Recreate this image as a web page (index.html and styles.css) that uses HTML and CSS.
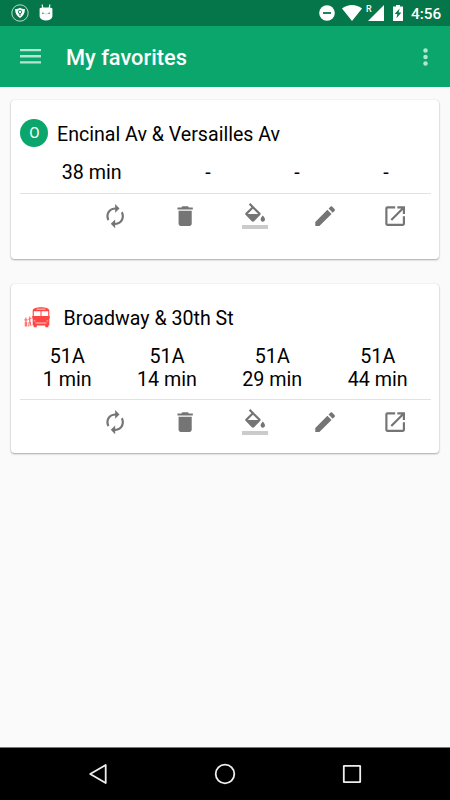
FILE: index.html
```html
<!DOCTYPE html>
<html lang="en">
<head>
<meta charset="utf-8">
<title>My favorites</title>
<link rel="stylesheet" href="styles.css">
</head>
<body>
<svg class="defs" aria-hidden="true">
  <symbol id="refresh" viewBox="0 0 24 24"><path d="M12 6v3l4-4-4-4v3c-4.42 0-8 3.58-8 8 0 1.57.46 3.03 1.24 4.26L6.7 14.8A5.87 5.87 0 0 1 6 12c0-3.31 2.69-6 6-6zm6.76 1.74L17.3 9.2c.44.84.7 1.79.7 2.8 0 3.31-2.69 6-6 6v-3l-4 4 4 4v-3c4.42 0 8-3.58 8-8 0-1.57-.46-3.03-1.24-4.26z"/></symbol>
  <symbol id="trash" viewBox="0 0 24 24"><path d="M6 19c0 1.1.9 2 2 2h8c1.1 0 2-.9 2-2V7H6v12zM19 4h-3.500l-1-1h-5l-1 1H5v2h14V4z"/></symbol>
  <symbol id="fill" viewBox="0 0 24 24"><path d="M16.560 8.940L7.620 0 6.210 1.410l2.380 2.380-5.150 5.150a1.490 1.490 0 0 0 0 2.120l5.500 5.500c.29.29.68.44 1.060.44s.77-.15 1.060-.44l5.500-5.500c.59-.58.59-1.530 0-2.120zM5.210 10L10 5.210 14.790 10H5.210zM19 11.500s-2 2.170-2 3.500c0 1.100.9 2 2 2s2-.9 2-2c0-1.330-2-3.500-2-3.500z"/><path class="swatch" d="M0 20h24v4H0z"/></symbol>
  <symbol id="pencil" viewBox="0 0 24 24"><path d="M3 17.250V21h3.750L17.810 9.940l-3.750-3.750L3 17.250zM20.710 7.040a1 1 0 0 0 0-1.410l-2.340-2.340a1 1 0 0 0-1.410 0l-1.830 1.830 3.750 3.750 1.830-1.830z"/></symbol>
  <symbol id="open" viewBox="0 0 24 24"><path d="M19 19H5V5h7V3H5a2 2 0 0 0-2 2v14c0 1.100.89 2 2 2h14c1.100 0 2-.9 2-2v-7h-2v7zM14 3v2h3.590l-9.830 9.830 1.410 1.410L19 6.410V10h2V3h-7z"/></symbol>
</svg>

<header class="statusbar">
  <svg class="shield" viewBox="0 0 18 18"><circle cx="9" cy="9" r="8.200" fill="none" stroke="#b9dccb" stroke-width="1"/><path d="M9 3.800c1.600 1 3.300 1.300 4.900 1.300 0 4.200-1.400 7-4.900 8.900-3.500-1.900-4.900-4.700-4.900-8.900 1.600 0 3.300-.3 4.900-1.300z" fill="#fff"/><circle cx="9" cy="7.900" r="1.700" fill="none" stroke="#04794a" stroke-width=".9"/><path d="M9 9.500v2.500" stroke="#04794a" stroke-width="1"/></svg>
  <svg class="robot" viewBox="0 0 14 17"><path d="M3 .5l.9 3.500M11 .5L10.100 4" stroke="#fff" stroke-width="1.100"/><path d="M.6 4.500C2 3.200 4 3.600 7 3.600s5-.4 6.400.9V12.500c-.5 2.800-3.200 4-6.400 4s-5.900-1.200-6.400-4z" fill="#fff"/><circle cx="3.900" cy="9.200" r=".8" fill="#04794a"/><circle cx="10.100" cy="9.200" r=".8" fill="#04794a"/><path d="M5 9.600q2 .8 4 0" fill="none" stroke="#9bc9b4" stroke-width=".5"/></svg>
  <span class="spacer"></span>
  <svg class="dnd" viewBox="0 0 16 16"><circle cx="8" cy="8" r="7.800" fill="#fff"/><path d="M4 7.100h8v1.800H4z" fill="#04764a"/></svg>
  <svg class="wifi" viewBox="0 0 20 16"><path d="M0 3.600C5.500-1.200 14.500-1.200 20 3.600L10 16z" fill="#fff"/></svg>
  <span class="roaming">R</span>
  <svg class="signal" viewBox="0 0 16 16"><path d="M16 0v16H0z" fill="#fff"/></svg>
  <svg class="battery" viewBox="0 0 10 16"><path d="M3 0h4v1.600h3V16H0V1.600h3z" fill="#fff"/><path d="M6.600 3.600L1.700 9h2.700l-1 4.200 5-5.600H5.600z" fill="#04764a"/></svg>
  <span class="clock">4:56</span>
</header>

<nav class="appbar">
  <svg class="menu" viewBox="0 0 21 15"><path d="M0 0h21v2.300H0zM0 6.100h21v2.300H0zM0 12.200h21v2.300H0z"/></svg>
  <h1>My favorites</h1>
  <svg class="more" viewBox="0 0 5 18"><circle cx="2.500" cy="2.500" r="2.250"/><circle cx="2.500" cy="9" r="2.250"/><circle cx="2.500" cy="15.500" r="2.250"/></svg>
</nav>

<main>
  <section class="card card-line">
    <div class="heading"><span class="badge">O</span><h2>Encinal Av &amp; Versailles Av</h2></div>
    <div class="times single">
      <div>38 min</div><div>-</div><div>-</div><div>-</div>
    </div>
    <div class="actions">
      <svg><use href="#refresh"/></svg><svg><use href="#trash"/></svg><svg><use href="#fill"/></svg><svg><use href="#pencil"/></svg><svg><use href="#open"/></svg>
    </div>
  </section>

  <section class="card card-stop">
    <div class="heading">
      <svg class="bus" viewBox="0 0 27 21"><path fill="#ff4444" fill-rule="evenodd" d="M8.700 3.600C9 1 12.500.2 17 .2S25 1 25.300 3.600V9h.5v2.500h-.5v7h-1v1.800h-3v-1.800h-8.600v1.800h-3v-1.800h-1v-7h-.5V9h.5zM9.800 4.300V9h6.700V4.300zm7.700 0V9h6.700V4.300zM12.500 1.800v.8h9v-.8z"/><path fill="#ff9c9c" d="M9.700 13.300h1.800v1.200H9.700zM22.500 13.300h1.800v1.200h-1.800zM11.500 15.200h11v1.600h-11z"/><path fill="none" stroke="#ff7070" stroke-width="1.200" d="M1.900 10.500V15M.3 12.800h3.300M1.300 15v4.500M2.600 15v4.500M5.700 9.500V15M4.200 12.300l3.300-1M5.200 15l-.5 4.500M6.300 14.800l.5 4"/></svg>
      <h2>Broadway &amp; 30th St</h2>
    </div>
    <div class="times double">
      <div>51A<br>1 min</div><div>51A<br>14 min</div><div>51A<br>29 min</div><div>51A<br>44 min</div>
    </div>
    <div class="actions">
      <svg><use href="#refresh"/></svg><svg><use href="#trash"/></svg><svg><use href="#fill"/></svg><svg><use href="#pencil"/></svg><svg><use href="#open"/></svg>
    </div>
  </section>
</main>

<footer class="navbar">
  <svg viewBox="0 0 22 22"><path d="M18.700 2v18L3.200 11z"/></svg>
  <svg viewBox="0 0 22 22"><circle cx="11" cy="11" r="9.300"/></svg>
  <svg viewBox="0 0 22 22"><rect x="2.800" y="2.800" width="16.400" height="16.400" rx=".4"/></svg>
</footer>
</body>
</html>
```

FILE: styles.css
```css
* { box-sizing: border-box; }
body {
  margin: 0;
  width: 450px;
  height: 800px;
  display: flex;
  flex-direction: column;
  overflow: hidden;
  background: #fafafa;
  color: #000;
  font-family: Roboto, "Liberation Sans", sans-serif;
}
h1, h2 { margin: 0; }
svg { display: block; flex: none; }
.defs { position: absolute; width: 0; height: 0; }

.statusbar {
  flex: none;
  height: 26px;
  padding: 0 9px 0 11px;
  display: flex;
  align-items: center;
  background: #04764a;
  color: #fff;
}
.shield { width: 18px; height: 18px; }
.robot { width: 14px; height: 17px; margin: 0 0 2px 10px; }
.spacer { flex: 1; }
.dnd { width: 16px; height: 16px; margin-right: 7px; }
.wifi { width: 20px; height: 16px; margin-right: 4px; }
.roaming { width: 5px; margin-right: -3px; align-self: flex-start; padding-top: 4px; font-size: 9px; line-height: 10px; font-weight: 500; }
.signal { width: 16px; height: 16px; margin-right: 9px; }
.battery { width: 10px; height: 16px; margin-right: 8px; }
.clock { width: 30px; font-size: 15.300px; line-height: 26px; font-weight: 500; padding-top: 2px; white-space: nowrap; }

.appbar {
  flex: none;
  height: 61px;
  padding: 0 22px 0 20px;
  display: flex;
  align-items: center;
  background: #0aa66c;
}
.menu { width: 21px; height: 15px; fill: #b5e4d0; }
.appbar h1 { flex: 1; margin-left: 25px; padding-top: 2px; font-size: 21.800px; line-height: 26px; font-weight: 500; color: #fff; }
.more { width: 5px; height: 18px; fill: #b5e4d0; }

main { flex: 1; padding: 12.500px 11px 0; }
.card {
  padding: 0 8.500px 0 9px;
  border-radius: 3.500px;
  background: #fff;
  box-shadow: 0 1px 2px rgba(0, 0, 0, .32), 0 0 1px rgba(0, 0, 0, .18);
}
.card-line { height: 159.500px; padding-top: 19.500px; margin-bottom: 24.500px; }
.card-stop { height: 169px; padding-top: 19.500px; }
.heading { display: flex; align-items: center; height: 28px; }
.heading h2 { font-size: 19.600px; line-height: 24px; font-weight: 400; white-space: nowrap; padding-top: 3px; }
.badge {
  width: 28px;
  height: 28px;
  margin-right: 9px;
  padding-left: 1px;
  border-radius: 50%;
  background: #0aa66c;
  color: #fff;
  font-size: 15px;
  line-height: 29px;
  text-align: center;
}
.bus { width: 27px; height: 21px; margin: 0 12.500px 0 4px; }
.times { display: grid; font-size: 19.700px; line-height: 23px; text-align: center; }
.single { grid-template-columns: 143.500px 89px 89px 89px; height: 46px; padding-top: 13.500px; }
.double { grid-template-columns: 94.500px 105px 105.500px 105.500px; height: 68px; padding-top: 13.500px; }
.actions {
  display: flex;
  gap: 43.700px;
  padding: 8.700px 0 0 82.300px;
  border-top: 1px solid #e2e2e2;
}
.actions svg { width: 26.300px; height: 26.300px; fill: #757575; }
.swatch { fill: #cbcbcb; }

.navbar {
  flex: none;
  height: 53px;
  padding: 0 87px;
  display: flex;
  align-items: center;
  justify-content: space-between;
  border-top: 1px solid #777;
  background: #000;
}
.navbar svg { width: 22px; height: 22px; fill: none; stroke: #eee; stroke-width: 1.800; stroke-linejoin: round; }
```
